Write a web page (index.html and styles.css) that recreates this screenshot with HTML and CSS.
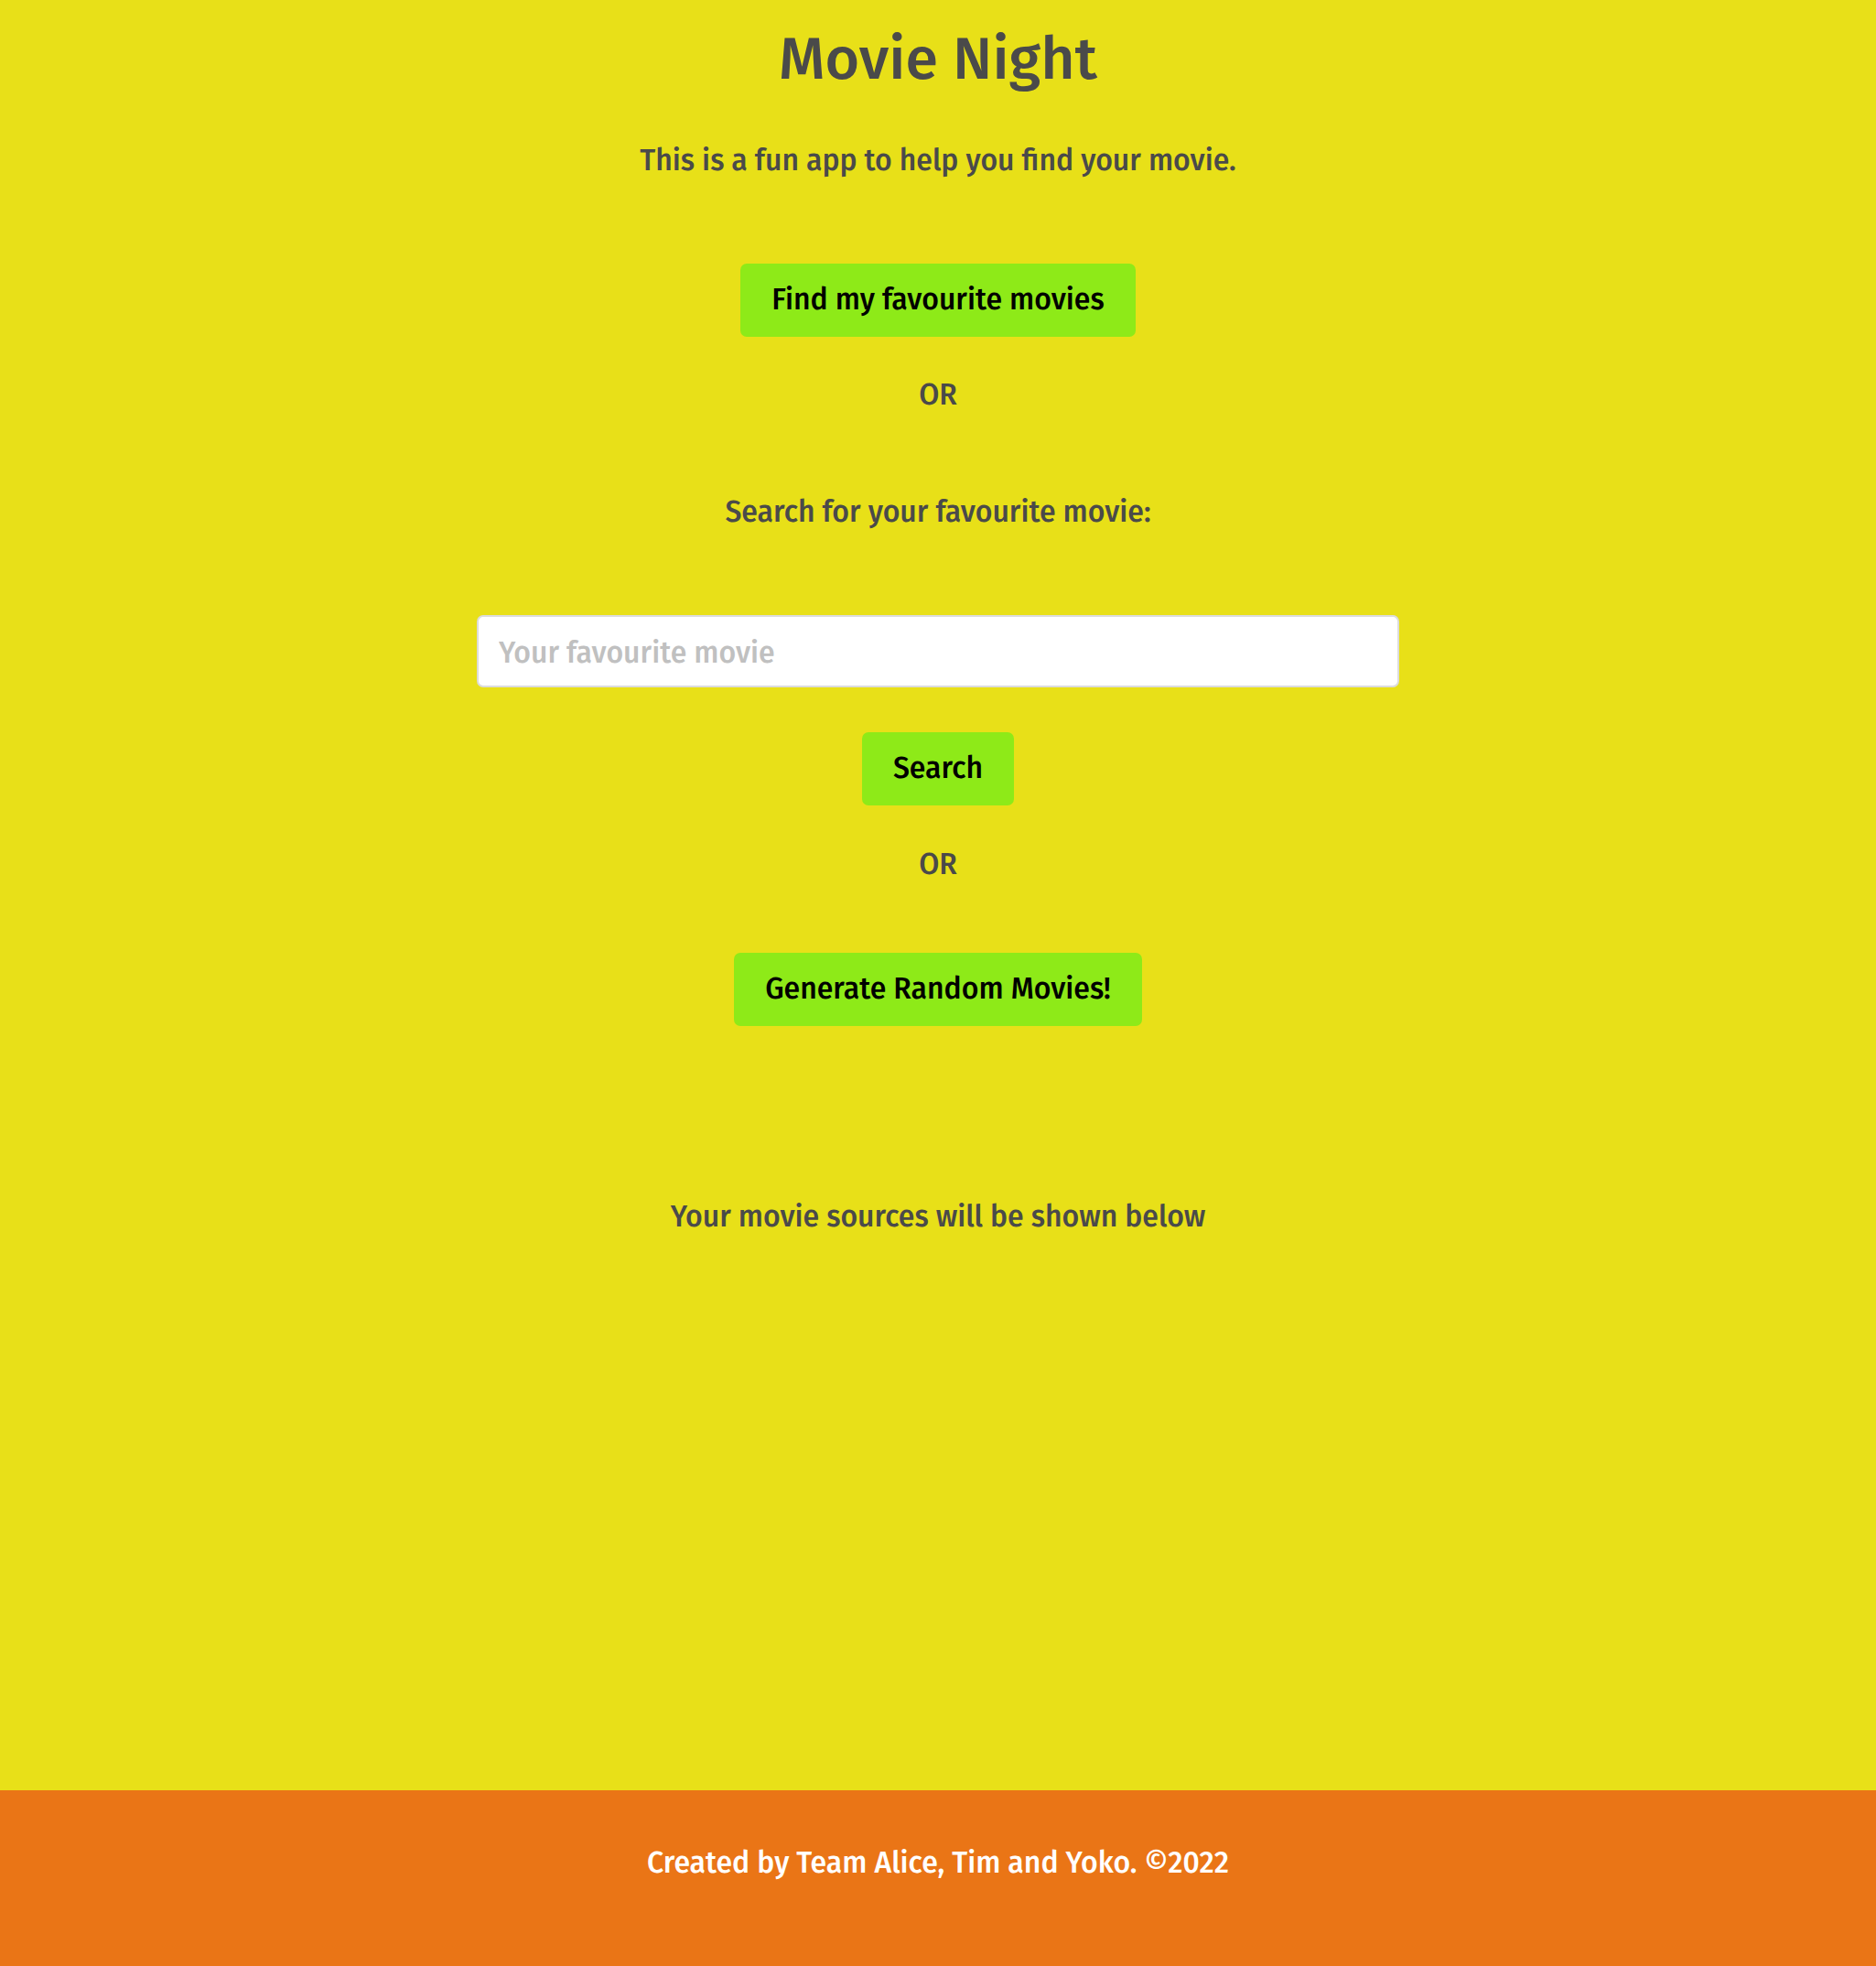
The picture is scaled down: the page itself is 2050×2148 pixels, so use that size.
FILE: index.html
```html
<!DOCTYPE html>
<html lang="en">
<head>
<meta charset="utf-8">
<title>Movie Night</title>
<link rel="stylesheet" href="styles.css">
</head>
<body>
<main class="main">
  <h1 class="title">Movie Night</h1>
  <p class="subtitle">This is a fun app to help you find your movie.</p>
  <button class="btn btn-find">Find my favourite movies</button>
  <p class="or or-first">OR</p>
  <p class="label">Search for your favourite movie:</p>
  <input class="search-input" type="text" placeholder="Your favourite movie">
  <button class="btn btn-search">Search</button>
  <p class="or or-second">OR</p>
  <button class="btn btn-random">Generate Random Movies!</button>
  <p class="sources">Your movie sources will be shown below</p>
</main>
<footer class="footer">
  <p class="footer-text">Created by Team Alice, Tim and Yoko. ©2022</p>
</footer>
</body>
</html>
```

FILE: styles.css
```css
* { box-sizing: border-box; }
html, body { margin: 0; padding: 0; }
body {
  min-height: 100vh;
  display: flex;
  flex-direction: column;
  background: #e8e018;
  font-family: "Fira Sans", Lato, "Open Sans", sans-serif;
  font-weight: 500;
  color: #4a4a4a;
}
.main {
  flex: 1;
  display: flex;
  flex-direction: column;
  align-items: center;
}
.title {
  margin: 25px 0 0;
  font-size: 64.5px;
  line-height: 80px;
  font-weight: 500;
}
.subtitle, .or, .label, .sources {
  margin: 0;
  font-size: 32px;
  line-height: 40px;
}
.subtitle { margin-top: 50px; }
.btn {
  height: 80px;
  padding: 0 34px 2px;
  border: none;
  border-radius: 7px;
  background: #8eea18;
  color: #000;
  font-family: inherit;
  font-weight: 500;
  font-size: 32px;
}
.btn-find { margin-top: 93px; }
.or-first { margin-top: 43px; }
.label { margin-top: 88px; }
.search-input {
  margin-top: 93px;
  width: 1008px;
  height: 79px;
  padding: 2px 22px 0;
  border: 2px solid #dcdcdc;
  border-radius: 7px;
  background: #fff;
  font-family: inherit;
  font-weight: 500;
  font-size: 32px;
  color: #333;
}
.search-input::placeholder { color: #c0c0c0; }
.btn-search { margin-top: 49px; }
.or-second { margin-top: 44px; }
.btn-random { margin-top: 77px; }
.sources { margin-top: 188px; }
.footer {
  height: 192px;
  background: #ea7516;
  padding-top: 59px;
}
.footer-text {
  margin: 0;
  text-align: center;
  color: #fff;
  font-size: 32px;
  line-height: 40px;
}
```
